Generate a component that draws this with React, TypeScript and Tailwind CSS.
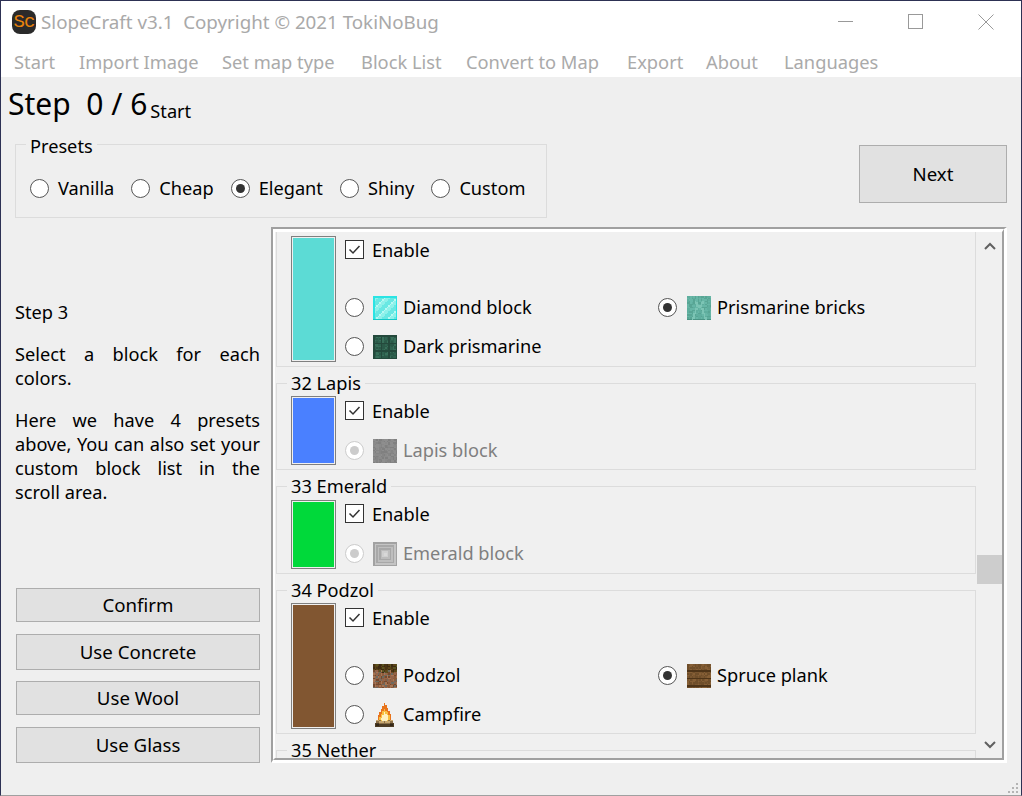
import React from "react";

const noise = (x: number, y: number, s: number) => {
  const v = Math.sin(x * 127.1 + y * 311.7 + s * 74.7) * 43758.5453;
  return v - Math.floor(v);
};
const pick = (list: string[], x: number, y: number, s: number) =>
  list[Math.floor(noise(x, y, s) * list.length)];

const campfire = [
  ".......O........",
  ".......OO.......",
  "......OOO.......",
  "......OOOO......",
  ".....OOYOO......",
  ".....OYYYOO.....",
  "....OOYWYYO.....",
  "....OYYWWYOO....",
  "...OOYWWWWYO....",
  "...OYYWWWWYO....",
  "...OYWWWWWYO....",
  "..TTLYWWWYLTT...",
  "..LLTTTLTTTLL...",
  ".DDDLLLLLLLDDD..",
  ".DKKDDDDDDDKKD..",
  ".DDDDDDDDDDDDD..",
];
const campColors: Record<string, string> = {
  O: "#e8741c", Y: "#f8c040", W: "#fff2c0", T: "#c8a870", L: "#8c7048", D: "#4e3c24", K: "#33281a",
};

const painters: Record<string, (x: number, y: number) => string> = {
  diamond: (x, y) => {
    if (y === 15) return "#14c8c8";
    if (y === 0 || x === 0 || x === 15) return "#2ae4e4";
    const band = (x + y) % 8;
    return band < 1 ? "#b8f9f3" : band < 4 ? "#8ef1ea" : "#68e8e3";
  },
  dark: (x, y) => {
    if (x % 5 === 0 || y % 5 === 0) return "#24493c";
    return pick(["#2f6350", "#386f5a", "#2a5948"], x, y, 2);
  },
  prismarine: (x, y) => {
    const d = Math.abs(x - 7.5);
    if (y > 2 && Math.abs(d - (y < 8 ? (8 - y) / 2 : 2 + (y - 8) / 3)) < 0.6) return "#7cc4b4";
    if (y === 15) return "#4a9484";
    return pick(["#5fae9e", "#67b6a6", "#58a594"], x, y, 3);
  },
  lapis: (x, y) => pick(["#858585", "#8a8a8a", "#808080", "#8e8e8e"], x, y, 4),
  emerald: (x, y) => {
    const d = Math.min(x, y, 15 - x, 15 - y);
    return ["#a2a2a2", "#c4c4c4", "#a8a8a8", "#bebebe", "#a8a8a8", "#bcbcbc", "#cfcfcf", "#d8d8d8"][d];
  },
  podzol: (x, y) => {
    if (y < 3 + noise(x, 0, 5) * 3) return pick(["#4a3414", "#5c4418", "#3e2c12", "#5a5420"], x, y, 6);
    return pick(["#8c5c3c", "#a87452", "#74492e", "#94644a", "#6c6a60"], x, y, 7);
  },
  spruce: (x, y) => {
    if (y % 5 === 4) return "#4e3418";
    return pick(["#7a5630", "#865f36", "#6f4e2a"], x, y, 8);
  },
};

function Pixels({ kind }: { kind: string }) {
  const cells: React.ReactElement[] = [];
  for (let y = 0; y < 16; y++) {
    for (let x = 0; x < 16; x++) {
      const fill = kind === "campfire" ? campColors[campfire[y][x]] : painters[kind](x, y);
      if (fill) cells.push(<rect key={`${x}-${y}`} x={x} y={y} width={1} height={1} fill={fill} />);
    }
  }
  return (
    <svg viewBox="0 0 16 16" shapeRendering="crispEdges" className="w-6 h-6 block">
      {cells}
    </svg>
  );
}

function Radio({ on, disabled }: { on?: boolean; disabled?: boolean }) {
  return (
    <span
      className={
        disabled
          ? "w-[19px] h-[19px] rounded-full border border-[#cccccc] bg-white flex items-center justify-center shrink-0"
          : "w-[19px] h-[19px] rounded-full border border-[#555555] bg-white flex items-center justify-center shrink-0"
      }
    >
      {on && (
        <span
          className={
            disabled ? "w-[9px] h-[9px] rounded-full bg-[#cccccc]" : "w-[9px] h-[9px] rounded-full bg-[#333333]"
          }
        />
      )}
    </span>
  );
}

function CheckRow() {
  return (
    <div className="flex items-center h-[19px]">
      <span className="w-[19px] h-[19px] border border-[#333333] bg-white flex items-center justify-center shrink-0">
        <svg viewBox="0 0 17 17" className="w-[17px] h-[17px]" fill="none" stroke="#333333" strokeWidth="1.5">
          <path d="M3.5 8.5 L7 12 L13.5 5" />
        </svg>
      </span>
      <span className="ml-2 pt-[2px] leading-[19px]">Enable</span>
    </div>
  );
}

type Opt = { label: string; kind: string; on?: boolean };

function Option({ opt, disabled }: { opt: Opt; disabled?: boolean }) {
  return (
    <div className="flex items-center h-[24px]">
      <Radio on={opt.on} disabled={disabled} />
      <span className={opt.on && !disabled ? "ml-[10px] mt-[2px]" : "ml-[9px] mt-[2px]"}>
        <Pixels kind={opt.kind} />
      </span>
      <span className={disabled ? "ml-[6px] text-[#7f7f7f]" : "ml-[6px]"}>{opt.label}</span>
    </div>
  );
}

function Group({
  label,
  color,
  swatch,
  rows,
  disabled,
  spacer,
  clip,
  top,
  checkTop,
}: {
  label: string;
  color: string;
  swatch: string;
  rows: Opt[];
  disabled?: boolean;
  spacer?: boolean;
  clip?: string;
  top?: string;
  checkTop?: string;
}) {
  return (
    <section className={`relative border border-[#dcdcdc] shrink-0 ${clip ?? ""}`}>
      {label && (
        <span className="absolute left-[10px] -top-[13px] px-[4px] bg-[#f0f0f0] leading-[24px]">{label}</span>
      )}
      <div className={`flex pl-[14px] pb-[4px] ${top ?? "pt-[12px]"}`}>
        <div className={`w-[45px] border border-[#7f7f7f] p-[1px] shrink-0 ${swatch}`}>
          <div className={`w-full h-full ${color}`} />
        </div>
        <div className={`flex-1 pl-[9px] ${checkTop ?? "pt-[5px]"}`}>
          <CheckRow />
          <div
            className={
              spacer
                ? "grid grid-cols-[313px_1fr] gap-y-[15px] mt-[36px]"
                : "grid grid-cols-[313px_1fr] gap-y-[15px] mt-[18px]"
            }
          >
            {rows.map((o) => (
              <Option key={o.label} opt={o} disabled={disabled} />
            ))}
          </div>
        </div>
      </div>
    </section>
  );
}

function SideButton({ label, h }: { label: string; h: string }) {
  return (
    <button
      className={`w-[244px] ml-[1px] ${h} bg-[#e1e1e1] border border-[#adadad] flex items-center justify-center text-[18.67px]`}
    >
      {label}
    </button>
  );
}

export default function App() {
  return (
    <div className="w-[1022px] h-[796px] flex flex-col overflow-hidden relative bg-[#efefef] text-black border border-[#2d3154] border-b-[#a0a0a0] font-['Noto_Sans',sans-serif] text-[18.2px] leading-[24px]">
      <header className="h-[38px] pt-[4px] bg-white flex items-center shrink-0">
        <div className="w-6 h-6 ml-[11px] rounded-[8px] bg-[#2a2a2a] text-[#e8820c] flex items-center justify-center text-[19px] leading-none font-['Liberation_Mono',monospace] tracking-[-1px]">
          Sc
        </div>
        <div className="ml-[5px] text-[18.75px] text-[#a9a9a9] whitespace-pre">SlopeCraft v3.1  Copyright © 2021 TokiNoBug</div>
        <div className="ml-auto flex">
          <div className="w-[70px] h-[34px] flex items-center justify-center">
            <svg width="16" height="16" viewBox="0 0 16 16"><path d="M0 7.5H15" stroke="#999999" /></svg>
          </div>
          <div className="w-[70px] h-[34px] flex items-center justify-center">
            <svg width="16" height="16" viewBox="0 0 16 16" fill="none"><rect x="0.5" y="0.5" width="14" height="14" stroke="#999999" /></svg>
          </div>
          <div className="w-[70px] h-[34px] flex items-center justify-center">
            <svg width="16" height="16" viewBox="0 0 16 16" fill="none"><path d="M0.5 0.5L15.5 15.5M15.5 0.5L0.5 15.5" stroke="#999999" /></svg>
          </div>
        </div>
      </header>
      <nav className="h-[38px] bg-white flex items-center pl-[13px] pt-[8px] text-[18.3px] text-[#aaaaaa] shrink-0">
        <span className="w-[65px]">Start</span>
        <span className="w-[143px]">Import Image</span>
        <span className="w-[139px]">Set map type</span>
        <span className="w-[105px]">Block List</span>
        <span className="w-[161px]">Convert to Map</span>
        <span className="w-[79px]">Export</span>
        <span className="w-[78px]">About</span>
        <span>Languages</span>
      </nav>

      <main className="flex-1 flex flex-col min-h-0">
        <div className="h-[67px] pl-[7px] pt-[8px] flex items-start shrink-0">
          <span className="text-[30px] leading-[38px] whitespace-pre">Step  0 / 6</span>
          <span className="mt-[14px] ml-[3px]">Start</span>
        </div>

        <div className="flex items-start shrink-0 h-[83px]">
          <section className="relative ml-[14px] w-[532px] h-[74px] border border-[#dcdcdc] pt-[31px] pl-[14px] flex items-start gap-[17px]">
            <span className="absolute left-[10px] -top-[11px] px-[4px] bg-[#efefef]">Presets</span>
            {["Vanilla", "Cheap", "Elegant", "Shiny", "Custom"].map((l) => (
              <div key={l} className="flex items-center gap-[9px] h-[24px]">
                <Radio on={l === "Elegant"} />
                <span>{l}</span>
              </div>
            ))}
          </section>
          <button className="ml-auto mr-[14px] mt-[1px] w-[148px] h-[58px] bg-[#e1e1e1] border border-[#adadad] text-[18.67px]">
            Next
          </button>
        </div>

        <div className="flex shrink-0 h-[536px]">
          <aside className="w-[245px] ml-[14px] flex flex-col shrink-0">
            <div className="pt-[73px]">
              <p>Step 3</p>
              <p className="mt-[18px] text-justify">Select a block for each colors.</p>
              <p className="mt-[18px] text-justify">
                Here we have 4 presets above, You can also set your custom block list in the scroll area.
              </p>
            </div>
            <div className="mt-auto flex flex-col">
              <SideButton label="Confirm" h="h-[34px]" />
              <div className="h-[12px]" />
              <SideButton label="Use Concrete" h="h-[36px]" />
              <div className="h-[11px]" />
              <SideButton label="Use Wool" h="h-[34px]" />
              <div className="h-[12px]" />
              <SideButton label="Use Glass" h="h-[36px]" />
            </div>
          </aside>

          <div className="ml-[11px] w-[736px] h-[536px] border-t-2 border-l-2 border-r-[3px] border-b-[3px] border-t-[#a0a0a0] border-l-[#a0a0a0] border-r-white border-b-white">
            <div className="w-full h-full border-t-[3px] border-l-[2px] border-r-2 border-b-2 border-t-white border-l-white border-r-[#a0a0a0] border-b-[#a0a0a0] bg-[#f0f0f0] flex overflow-hidden">
              <div className="w-[701px] pl-[1px] flex flex-col gap-[16px] overflow-hidden shrink-0">
                <Group
                  label=""
                  color="bg-[#5cdbd5]"
                  swatch="h-[126px]"
                  spacer
                  clip="-mt-[9px]"
                  checkTop="pt-[4px]"
                  rows={[
                    { label: "Diamond block", kind: "diamond" },
                    { label: "Prismarine bricks", kind: "prismarine", on: true },
                    { label: "Dark prismarine", kind: "dark" },
                  ]}
                />
                <Group
                  label="32 Lapis"
                  color="bg-[#4a80ff]"
                  swatch="h-[69px]"
                  disabled
                  rows={[{ label: "Lapis block", kind: "lapis", on: true }]}
                />
                <Group
                  label="33 Emerald"
                  color="bg-[#00d93a]"
                  swatch="h-[69px]"
                  disabled
                  top="pt-[13px]"
                  checkTop="pt-[4px]"
                  rows={[{ label: "Emerald block", kind: "emerald", on: true }]}
                />
                <Group
                  label="34 Podzol"
                  color="bg-[#815631]"
                  swatch="h-[126px]"
                  spacer
                  rows={[
                    { label: "Podzol", kind: "podzol" },
                    { label: "Spruce plank", kind: "spruce", on: true },
                    { label: "Campfire", kind: "campfire" },
                  ]}
                />
                <Group label="35 Nether" color="bg-[#700200]" swatch="h-[69px]" rows={[]} />
              </div>
              <div className="w-[25px] ml-[1px] flex flex-col items-stretch shrink-0">
                <div className="h-[323px] pt-[10px] flex justify-center items-start">
                  <svg width="12" height="8" viewBox="0 0 12 8" fill="none"><path d="M1 7L6 2L11 7" stroke="#606060" strokeWidth="2" /></svg>
                </div>
                <div className="h-[29px] bg-[#cdcdcd]" />
                <div className="flex-1 flex justify-center items-end pb-[9px]">
                  <svg width="12" height="8" viewBox="0 0 12 8" fill="none"><path d="M1 1L6 6L11 1" stroke="#606060" strokeWidth="2" /></svg>
                </div>
              </div>
            </div>
          </div>
        </div>
      </main>

      <svg className="absolute right-[1px] bottom-[0px]" width="12" height="12" viewBox="0 0 12 12" fill="#b4b4b4" shapeRendering="crispEdges">
        <rect x="8" y="0" width="2" height="2" />
        <rect x="4" y="4" width="2" height="2" />
        <rect x="8" y="4" width="2" height="2" />
        <rect x="0" y="8" width="2" height="2" />
        <rect x="4" y="8" width="2" height="2" />
        <rect x="8" y="8" width="2" height="2" />
      </svg>
    </div>
  );
}
